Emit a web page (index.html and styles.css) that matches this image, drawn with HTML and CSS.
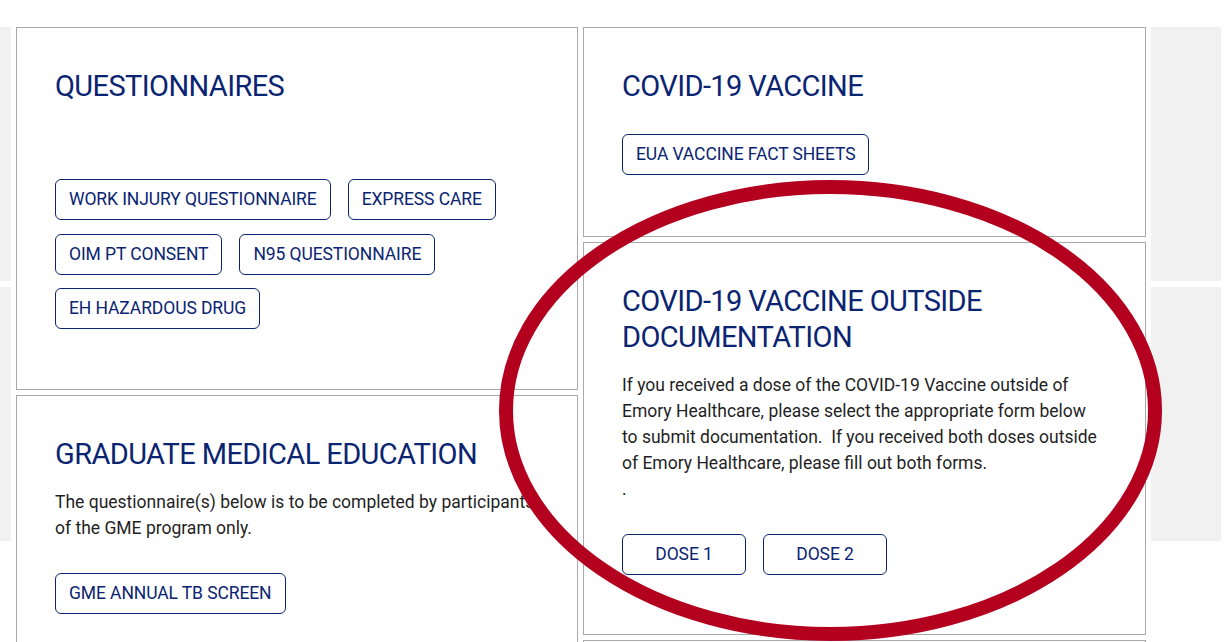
FILE: index.html
```html
<!DOCTYPE html>
<html lang="en">
<head>
<meta charset="utf-8">
<title>Forms</title>
<link rel="stylesheet" href="styles.css">
</head>
<body>
<div class="page">
  <div class="side side-left">
    <div class="tile"></div>
    <div class="tile"></div>
  </div>

  <div class="col col-left">
    <section class="card card-q">
      <h2 class="card-title">QUESTIONNAIRES</h2>
      <p class="card-text">&nbsp;</p>
      <div class="btns">
        <a class="btn" href="#">WORK INJURY QUESTIONNAIRE</a>
        <a class="btn" href="#">EXPRESS CARE</a>
        <a class="btn" href="#">OIM PT CONSENT</a>
        <a class="btn" href="#">N95 QUESTIONNAIRE</a>
        <a class="btn" href="#">EH HAZARDOUS DRUG</a>
      </div>
    </section>
    <section class="card card-gme">
      <h2 class="card-title">GRADUATE MEDICAL EDUCATION</h2>
      <p class="card-text">The questionnaire(s) below is to be completed by participants of the GME program only.</p>
      <div class="btns">
        <a class="btn" href="#">GME ANNUAL TB SCREEN</a>
      </div>
    </section>
  </div>

  <div class="col col-right">
    <section class="card card-vaccine">
      <h2 class="card-title">COVID-19 VACCINE</h2>
      <div class="btns">
        <a class="btn" href="#">EUA VACCINE FACT SHEETS</a>
      </div>
    </section>
    <section class="card card-outside">
      <h2 class="card-title">COVID-19 VACCINE OUTSIDE DOCUMENTATION</h2>
      <p class="card-text">If you received a dose of the COVID-19 Vaccine outside of Emory Healthcare, please select the appropriate form below to submit documentation.&nbsp; If you received both doses outside of Emory Healthcare, please fill out both forms.<br>.</p>
      <div class="btns">
        <a class="btn btn-wide" href="#">DOSE 1</a>
        <a class="btn btn-wide" href="#">DOSE 2</a>
      </div>
    </section>
    <section class="card card-next"></section>
  </div>

  <div class="side side-right">
    <div class="tile"></div>
    <div class="tile"></div>
  </div>

  <svg class="annotation" width="1226" height="642" viewBox="0 0 1226 642" aria-hidden="true">
    <ellipse cx="830.5" cy="410.5" rx="324.5" ry="223.5" fill="none" stroke="#b4001f" stroke-width="14"/>
  </svg>
</div>
</body>
</html>
```

FILE: styles.css
```css
* { box-sizing: border-box; }

html, body {
  margin: 0;
  padding: 0;
  background: #ffffff;
  height: 642px;
  overflow: hidden;
}

body {
  font-family: Roboto, "Noto Sans", Arial, sans-serif;
  color: #1f1f1f;
}

.page {
  position: relative;
  display: flex;
  gap: 5px;
  padding-top: 27px;
  height: 642px;
  overflow: hidden;
}

.side {
  display: flex;
  flex-direction: column;
  gap: 6px;
}

.side-left { width: 11px; }
.side-right { width: 70px; }

.tile {
  height: 254px;
  background: #f1f1f1;
}

.col {
  display: flex;
  flex-direction: column;
  gap: 5px;
}

.col-left { width: 562px; }
.col-right { width: 563px; }

.card {
  flex: none;
  background: #ffffff;
  border: 1px solid #a9a9a9;
  padding: 40px 38px 0;
}

.card-q { height: 363px; }
.card-gme { height: 300px; }
.card-vaccine { height: 210px; }
.card-outside { height: 393px; }
.card-next { height: 100px; }

.card-title {
  margin: 0 0 -2px;
  font-size: 29px;
  line-height: 36px;
  font-weight: 400;
  letter-spacing: -0.6px;
  color: #0a2472;
}

.card-text {
  margin: 19px 0 0;
  max-width: 481px;
  font-size: 17.5px;
  line-height: 26px;
  color: #1f1f1f;
}

.btns {
  display: flex;
  flex-wrap: wrap;
  column-gap: 17px;
  row-gap: 13.5px;
  margin-top: 32px;
}

.btn {
  display: inline-flex;
  justify-content: center;
  align-items: center;
  padding: 9px 13px;
  border: 1px solid #0a2472;
  border-radius: 6px;
  font-size: 17.5px;
  line-height: 21px;
  letter-spacing: -0.1px;
  color: #0a2472;
  text-decoration: none;
  white-space: nowrap;
}

.btn-wide { min-width: 124px; }

.annotation {
  position: absolute;
  left: 0;
  top: 0;
  pointer-events: none;
}
```
